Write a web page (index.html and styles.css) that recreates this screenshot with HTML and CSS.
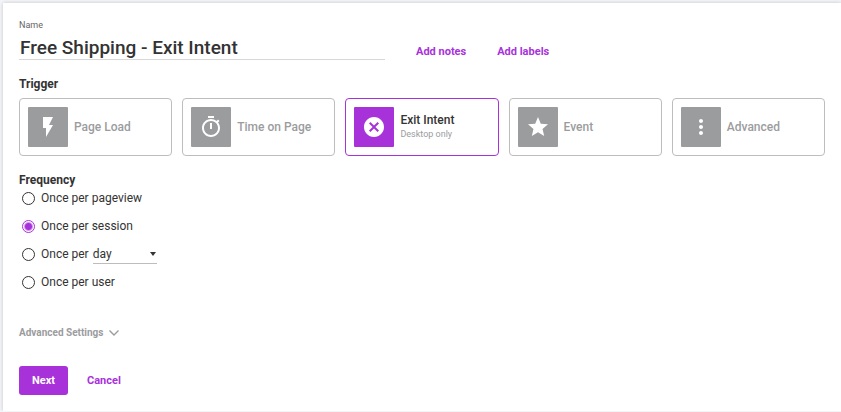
FILE: index.html
```html
<!DOCTYPE html>
<html lang="en">
<head>
    <meta charset="UTF-8">
    <meta name="viewport" content="width=device-width, initial-scale=1.0">
    <title>Free Shipping - Exit Intent</title>
    <link rel="stylesheet" href="styles.css">
</head>
<body>

    <form class="panel">
        <!-- Name -->
        <div class="name-row">
            <div class="name-field">
                <label for="name">Name</label>
                <input type="text" id="name" name="name" value="Free Shipping - Exit Intent">
            </div>
            <a class="link" href="#notes">Add notes</a>
            <a class="link" href="#labels">Add labels</a>
        </div>

        <!-- Trigger -->
        <h2>Trigger</h2>
        <div class="triggers">
            <button type="button" class="trigger">
                <span class="icon">
                    <svg viewBox="0 0 24 24"><path d="M7 2v11h3v9l7-12h-4l4-8z"/></svg>
                </span>
                <span class="title">Page Load</span>
            </button>
            <button type="button" class="trigger">
                <span class="icon">
                    <svg viewBox="0 0 24 24"><path d="M15 1H9v2h6V1zm-4 13h2V8h-2v6zm8.03-6.61l1.42-1.42c-.43-.51-.9-.99-1.41-1.41l-1.42 1.42C16.07 4.74 14.12 4 12 4c-4.97 0-9 4.03-9 9s4.02 9 9 9 9-4.03 9-9c0-2.12-.74-4.07-1.97-5.61zM12 20c-3.87 0-7-3.13-7-7s3.13-7 7-7 7 3.13 7 7-3.13 7-7 7z"/></svg>
                </span>
                <span class="title">Time on Page</span>
            </button>
            <button type="button" class="trigger active" aria-pressed="true">
                <span class="icon">
                    <svg viewBox="0 0 24 24"><path d="M12 2C6.47 2 2 6.47 2 12s4.47 10 10 10 10-4.47 10-10S17.53 2 12 2zm5 13.59L15.59 17 12 13.41 8.41 17 7 15.59 10.59 12 7 8.41 8.41 7 12 10.59 15.59 7 17 8.41 13.41 12 17 15.59z"/></svg>
                </span>
                <span class="text">
                    <span class="title">Exit Intent</span>
                    <span class="subtitle">Desktop only</span>
                </span>
            </button>
            <button type="button" class="trigger">
                <span class="icon">
                    <svg viewBox="0 0 24 24"><path d="M12 17.27L18.18 21l-1.64-7.03L22 9.24l-7.19-.61L12 2 9.19 8.63 2 9.24l5.46 4.73L5.82 21z"/></svg>
                </span>
                <span class="title">Event</span>
            </button>
            <button type="button" class="trigger">
                <span class="icon">
                    <svg viewBox="0 0 24 24"><path d="M12 8c1.1 0 2-.9 2-2s-.9-2-2-2-2 .9-2 2 .9 2 2 2zm0 2c-1.1 0-2 .9-2 2s.9 2 2 2 2-.9 2-2-.9-2-2-2zm0 6c-1.1 0-2 .9-2 2s.9 2 2 2 2-.9 2-2-.9-2-2-2z"/></svg>
                </span>
                <span class="title">Advanced</span>
            </button>
        </div>

        <!-- Frequency -->
        <fieldset class="options">
            <legend>Frequency</legend>
            <div class="option">
                <input type="radio" name="frequency" id="per-pageview">
                <label for="per-pageview">Once per pageview</label>
            </div>
            <div class="option">
                <input type="radio" name="frequency" id="per-session" checked>
                <label for="per-session">Once per session</label>
            </div>
            <div class="option">
                <input type="radio" name="frequency" id="per-period">
                <label for="per-period">Once per</label>
                <div class="select">
                    <select aria-label="Period">
                        <option>day</option>
                        <option>week</option>
                        <option>month</option>
                    </select>
                    <svg viewBox="0 0 6 4"><path d="M0 0h6L3 4z"/></svg>
                </div>
            </div>
            <div class="option">
                <input type="radio" name="frequency" id="per-user">
                <label for="per-user">Once per user</label>
            </div>
        </fieldset>

        <button type="button" class="settings">
            Advanced Settings
            <svg viewBox="0 0 10 6"><path d="M.5 .5L5 5 9.500 .5"/></svg>
        </button>

        <div class="actions">
            <button type="submit" class="next">Next</button>
            <a class="link" href="#cancel">Cancel</a>
        </div>
    </form>

</body>
</html>
```

FILE: styles.css
```css
* {
    box-sizing: border-box;
}

body {
    margin: 0;
    padding: 3px 0 0 3px;
    background-color: #f4f5f8;
    font-family: Roboto, "Liberation Sans", sans-serif;
    font-size: 12px;
    color: #333;
}

input,
select,
button {
    font-family: inherit;
    font-size: inherit;
    color: inherit;
}

.panel {
    padding: 16px;
    background-color: #fff;
    box-shadow: 0 0 4px rgba(0, 0, 0, 0.2);
}

.name-row {
    display: flex;
    align-items: flex-end;
}

.name-field {
    width: 366px;
}

.name-field label {
    display: block;
    font-size: 9px;
    line-height: 12px;
    color: #666;
}

.name-field input {
    display: block;
    width: 100%;
    height: 29px;
    padding: 4px 1px 0;
    border: none;
    border-bottom: 1px solid #d8d8d8;
    outline: none;
    font-size: 19px;
    font-weight: 500;
}

.link {
    margin-left: 31px;
    color: #a832da;
    font-size: 11px;
    font-weight: bold;
    line-height: 16px;
    text-decoration: none;
}

h2,
legend {
    margin: 0;
    padding: 0;
    font-size: 12px;
    font-weight: bold;
    line-height: 16px;
}

h2 {
    margin: 16px 0 6px;
}

.triggers {
    display: grid;
    grid-template-columns: repeat(5, 1fr);
    gap: 10px;
}

.trigger {
    display: flex;
    align-items: center;
    gap: 6px;
    height: 58px;
    padding: 8px;
    background-color: #fff;
    border: 1px solid #bdbdbd;
    border-radius: 4px;
    color: #9b9c9e;
    text-align: left;
    cursor: pointer;
}

.icon {
    display: flex;
    align-items: center;
    justify-content: center;
    width: 40px;
    height: 40px;
    border-radius: 1px;
    background-color: #9b9c9e;
}

.icon svg {
    width: 24px;
    height: 24px;
    fill: #fff;
}

.title {
    font-weight: 500;
    line-height: 14px;
}

.text {
    display: flex;
    flex-direction: column;
}

.subtitle {
    color: #9b9c9e;
    font-size: 9px;
    line-height: 14px;
}

.trigger.active {
    border-color: #a832da;
    color: #333;
}

.trigger.active .icon {
    background-color: #a832da;
}

.options {
    display: flex;
    flex-direction: column;
    gap: 8px;
    margin: 16px 0 0;
    padding: 0;
    border: none;
}

.option {
    display: flex;
    align-items: center;
    height: 20px;
    padding-left: 3px;
}

.option input {
    appearance: none;
    width: 13px;
    height: 13px;
    margin: 0 6px 0 0;
    border: 1px solid #333;
    border-radius: 50%;
}

.option input:checked {
    border-color: #a832da;
    background: radial-gradient(circle, #a832da 3px, #fff 5px);
}

.select {
    position: relative;
    width: 64px;
    margin-left: 4px;
}

.select select {
    appearance: none;
    display: block;
    width: 100%;
    height: 20px;
    padding: 0;
    border: none;
    border-bottom: 1px solid #bdbdbd;
    background: none;
    outline: none;
}

.select svg {
    position: absolute;
    top: 8px;
    right: 1px;
    width: 6px;
    height: 4px;
    fill: #333;
    pointer-events: none;
}

.settings {
    display: flex;
    align-items: center;
    gap: 6px;
    margin: 33px 0 25px;
    padding: 0;
    border: none;
    background: none;
    color: #9b9c9e;
    font-size: 10px;
    font-weight: bold;
    line-height: 16px;
    cursor: pointer;
}

.settings svg {
    width: 10px;
    height: 6px;
    fill: none;
    stroke: #9b9c9e;
    stroke-width: 1.4;
}

.actions {
    display: flex;
    align-items: center;
}

.actions .link {
    margin-left: 19px;
}

.next {
    height: 29px;
    padding: 0 13px;
    border: none;
    border-radius: 3px;
    background-color: #a832da;
    color: #fff;
    font-size: 11px;
    font-weight: bold;
    cursor: pointer;
}
```
